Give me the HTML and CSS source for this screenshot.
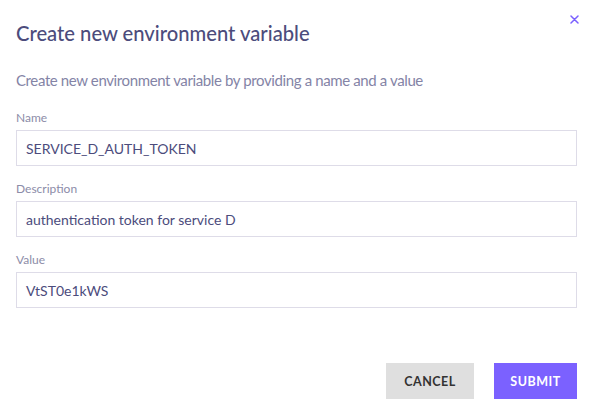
FILE: index.html
```html
<!DOCTYPE html>
<html>
<head>
<meta charset="utf-8">
<link rel="stylesheet" href="styles.css">
</head>
<body>
<div class="dialog">
  <button class="close" aria-label="Close">
    <svg width="9" height="9" viewBox="0 0 9 9"><path d="M1 1L8 8M8 1L1 8" stroke="#7b61ff" stroke-width="1.5" stroke-linecap="round"/></svg>
  </button>
  <h1 class="title">Create new environment variable</h1>
  <p class="subtitle">Create new environment variable by providing a name and a value</p>
  <div class="field">
    <label class="label">Name</label>
    <div class="input">SERVICE_D_AUTH_TOKEN</div>
  </div>
  <div class="field">
    <label class="label">Description</label>
    <div class="input">authentication token for service D</div>
  </div>
  <div class="field">
    <label class="label">Value</label>
    <div class="input">VtST0e1kWS</div>
  </div>
  <div class="actions">
    <button class="btn cancel">CANCEL</button>
    <button class="btn submit">SUBMIT</button>
  </div>
</div>
</body>
</html>
```
FILE: styles.css
```css
html, body { margin: 0; padding: 0; background: #fff; }
body { font-family: Lato, "Noto Sans", sans-serif; width: 594px; height: 416px; overflow: hidden; }
.dialog { position: relative; padding: 21px 17px 0 16px; }
.close { position: absolute; top: 15px; right: 15px; background: none; border: 0; padding: 0; width: 9px; height: 9px; cursor: pointer; }
.close svg { display: block; }
.title { margin: 0; font-size: 20.2px; font-weight: 500; color: #4c4c7c; line-height: 24px; }
.subtitle { margin: 25px 0 0; font-size: 15px; letter-spacing: -0.38px; color: #8484a6; line-height: 20px; }
.field { margin-top: 20px; }
.field + .field { margin-top: 15px; }
.label { display: block; font-size: 12px; color: #8c8ca8; line-height: 15px; margin-bottom: 5px; }
.input { height: 34px; border: 1px solid #dedce8; padding: 0 9px; font-size: 14px; color: #4c4c7c; display: flex; align-items: center; }
.actions { display: flex; justify-content: flex-end; gap: 20px; margin-top: 55px; }
.btn { height: 36px; border: 0; font-family: inherit; font-weight: 700; font-size: 12.5px; letter-spacing: 0.5px; padding: 0; }
.cancel { width: 88px; background: #dfdfdf; color: #333; }
.submit { width: 83px; background: #7b61ff; color: #fff; }
```
